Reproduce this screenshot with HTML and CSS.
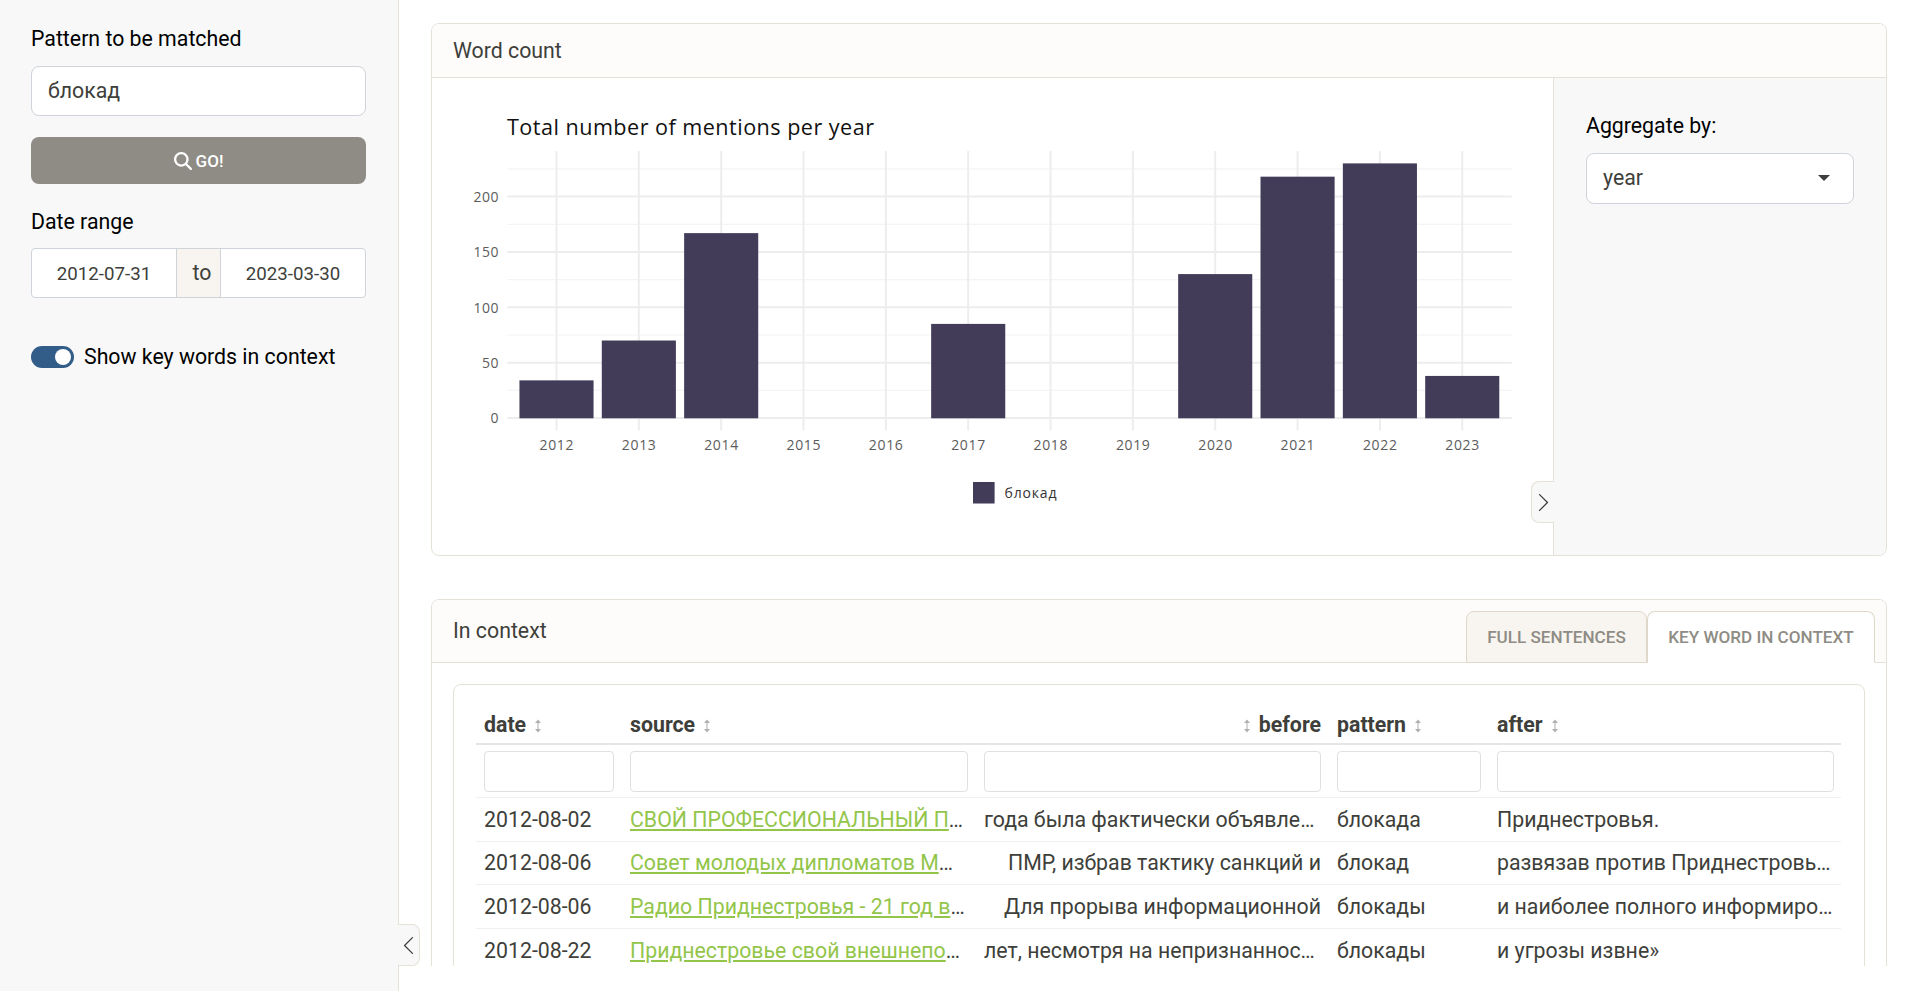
FILE: index.html
```html
<!DOCTYPE html>
<html lang="en">
<head>
<meta charset="utf-8">
<title>Word count</title>
<link rel="stylesheet" href="styles.css">
</head>
<body>
<svg class="defs" width="0" height="0" aria-hidden="true">
  <symbol id="sort" viewBox="0 0 10 16"><path d="M5 3v10" stroke="#c4c4c2" stroke-width="1.4"/><path d="M2 5 5 1.600 8 5zM2 11l3 3.400L8 11z" fill="#b0b0ae"/></symbol>
  <symbol id="chev-left" viewBox="0 0 16 16"><path fill-rule="evenodd" d="M11.354 1.646a.5.5 0 0 1 0 .708L5.707 8l5.647 5.646a.5.5 0 0 1-.708.708l-6-6a.5.5 0 0 1 0-.708l6-6a.5.5 0 0 1 .708 0z"/></symbol>
</svg>
<div class="app">
  <aside class="sidebar">
    <label class="label">Pattern to be matched</label>
    <div class="input">блокад</div>
    <button class="go"><svg class="go-icon" viewBox="0 0 512 512"><path fill="#fff" d="M416 208c0 45.900-14.900 88.300-40 122.700L502.600 457.400c12.500 12.500 12.500 32.800 0 45.300s-32.800 12.500-45.300 0L330.700 376c-34.400 25.200-76.800 40-122.700 40C93.100 416 0 322.900 0 208S93.100 0 208 0S416 93.100 416 208zM208 352a144 144 0 1 0 0-288 144 144 0 1 0 0 288z"/></svg><span>GO!</span></button>
    <label class="label">Date range</label>
    <div class="dates"><div class="date">2012-07-31</div><div class="to">to</div><div class="date">2023-03-30</div></div>
    <div class="switch-row"><span class="switch"><span class="knob"></span></span><span>Show key words in context</span></div>
    <div class="collapse main-collapse"><svg width="21" height="21"><use href="#chev-left"/></svg></div>
  </aside>
  <main class="main">
    <section class="card count-card">
      <header class="card-head">Word count</header>
      <div class="card-body">
        <div class="plot"><svg id="chart" width="1121" height="477" viewBox="432 78 1121 477"></svg></div>
        <div class="options">
          <label class="label">Aggregate by:</label>
          <div class="input select"><span>year</span><i class="caret"></i></div>
          <div class="collapse card-collapse"><svg class="flip" width="21" height="21"><use href="#chev-left"/></svg></div>
        </div>
      </div>
    </section>
    <section class="card context-card">
      <header class="card-head tabs-head"><span>In context</span>
        <nav class="tabs"><a class="tab">FULL SENTENCES</a><a class="tab active">KEY WORD IN CONTEXT</a></nav>
      </header>
      <div class="table-card">
        <div class="row head">
          <div class="cell">date<svg class="sort"><use href="#sort"/></svg></div>
          <div class="cell">source<svg class="sort"><use href="#sort"/></svg></div>
          <div class="cell right"><svg class="sort"><use href="#sort"/></svg>before</div>
          <div class="cell">pattern<svg class="sort"><use href="#sort"/></svg></div>
          <div class="cell">after<svg class="sort"><use href="#sort"/></svg></div>
        </div>
        <div class="row filters"><i></i><i></i><i></i><i></i><i></i></div>
        <div class="row"><div class="cell">2012-08-02</div><div class="cell"><a>СВОЙ ПРОФЕССИОНАЛЬНЫЙ П</a>…</div><div class="cell right"><span class="fill">года была фактически объявле…</span></div><div class="cell">блокада</div><div class="cell">Приднестровья.</div></div>
        <div class="row"><div class="cell">2012-08-06</div><div class="cell"><a>Совет молодых дипломатов М</a>…</div><div class="cell right">ПМР, избрав тактику санкций и</div><div class="cell">блокад</div><div class="cell">развязав против Приднестровь…</div></div>
        <div class="row"><div class="cell">2012-08-06</div><div class="cell"><a>Радио Приднестровья - 21 год в</a>…</div><div class="cell right">Для прорыва информационной</div><div class="cell">блокады</div><div class="cell">и наиболее полного информиро…</div></div>
        <div class="row"><div class="cell">2012-08-22</div><div class="cell"><a>Приднестровье свой внешнепо</a>…</div><div class="cell right"><span class="fill">лет, несмотря на непризнаннос…</span></div><div class="cell">блокады</div><div class="cell">и угрозы извне»</div></div>
      </div>
    </section>
  </main>
</div>
<script src="chart.js"></script>
</body>
</html>
```
FILE: styles.css
```css
* { box-sizing: border-box; }
body { margin: 0; background: #fff; color: #3e3f3a; font: 21.3px/32px Roboto, sans-serif; height: 991px; overflow: hidden; }
.defs { position: absolute; }
.app { display: flex; height: 991px; }
.sidebar { position: relative; width: 399px; flex: none; background: #f8f8f8; border-right: 1px solid #e6e1d7; padding: 23px 32px 0 31px; color: #000; }
.label { display: block; color: #000; height: 32px; margin-bottom: 11px; white-space: nowrap; }
.input { height: 50px; border: 1px solid #ced4da; border-radius: 8px; background: #fff; color: #3e3f3a; padding: 8px 16px; }
.go { display: flex; align-items: center; justify-content: center; gap: 4px; width: 335px; height: 47px; margin: 21px 0 22px; border: 0; border-radius: 8px; background: #8e8c84; color: #fff; font: 500 17px/26px Roboto, sans-serif; }
.go-icon { width: 18px; height: 18px; }
.go + .label { margin-bottom: 10px; }
.dates { display: flex; height: 50px; border: 1px solid #ced4da; border-radius: 4px; background: #fff; color: #3e3f3a; line-height: 48px; text-align: center; overflow: hidden; }
.date { flex: 1; font-size: 18.7px; line-height: 50px; }
.to { width: 45px; background: #f8f5f0; border: solid #ced4da; border-width: 0 1px; padding-left: 7px; }
.switch-row { display: flex; align-items: center; gap: 10px; margin-top: 43px; white-space: nowrap; }
.switch { width: 43px; height: 22px; border-radius: 11px; background: #325d88; padding: 3px; display: flex; justify-content: flex-end; }
.knob { width: 16px; height: 16px; border-radius: 50%; background: #fff; }
.collapse { position: absolute; width: 22px; height: 42px; background: #f8f8f8; border: 1px solid #e6e1d7; display: flex; align-items: center; justify-content: center; fill: #3e3f3a; }
.collapse svg { flex: none; }
.main-collapse { left: 398px; top: 924px; border-left: 0; border-radius: 0 8px 8px 0; }
.card-collapse { left: -23px; top: 403px; width: 23px; border-right: 0; border-radius: 8px 0 0 8px; }
.flip { transform: scaleX(-1); }
.main { flex: 1; padding: 23px 21px 0 32px; height: 966px; overflow: hidden; }
.card { border: 1px solid #e6e1d7; border-radius: 8px; background: #fff; }
.count-card { height: 533px; margin-bottom: 43px; }
.card-head { height: 54px; line-height: 53px; padding-left: 21px; background: #fdfcfa; border-bottom: 1px solid #e6e1d7; border-radius: 7px 7px 0 0; }
.card-body { display: flex; height: 477px; }
.plot { flex: 1; }
.plot svg { display: block; }
.options { position: relative; width: 333px; background: #f8f8f8; border-left: 1px solid #e6e1d7; border-radius: 0 0 7px 0; padding: 32px 32px 0 32px; }
.options .input { height: 51px; }
.select { display: flex; justify-content: space-between; align-items: center; padding: 7px 16px 9px; }
.caret { border: 6px solid transparent; border-top-color: #3e3f3a; border-bottom: 0; margin-right: 7px; }
.context-card { height: 500px; }
.tabs-head { display: flex; justify-content: space-between; height: 63px; line-height: 62px; }
.tabs { display: flex; padding: 11px 11px 0 0; }
.tab { height: 52px; border: 1px solid #dfd7ca; border-radius: 8px 8px 0 0; background: #f8f5f0; color: #8e8c84; font-weight: 500; font-size: 17.1px; line-height: 51px; text-align: center; width: 181px; }
.tab.active { width: 228px; background: #fff; border-bottom-color: #fff; }
.table-card { margin: 21px 21px 0; height: 480px; border: 1px solid #e6e1d7; border-radius: 8px; padding: 14px 23px 0 22px; }
.row { display: grid; grid-template-columns: 146px 354px 353px 160px 353px; border-top: 1px solid #f0f0f0; height: 43.700px; }
.row.head { border-top: 0; border-bottom: 2px solid #e5e5e5; height: 46px; font-weight: 700; }
.row.head .cell { padding-top: 10px; }
.cell { padding: 5.500px 8px 0; white-space: nowrap; overflow: hidden; }
.right { text-align: right; }
.fill { display: block; text-align: left; }
.cell a { color: #93c54b; text-decoration: underline; }
.sort { width: 10px; height: 16px; margin: 0 7px; vertical-align: -2px; }
.row.filters { border: 0; height: 52px; }
.filters i { height: 41px; margin: 6px 8px 0; border: 1px solid #e0e0e0; border-radius: 4px; }
.chart-text { font-family: "Open Sans", sans-serif; font-size: 14px; fill: #5c5c5c; }
.chart-text.legend { fill: #333; }
.chart-title { font-family: "Open Sans", sans-serif; font-size: 21.6px; fill: #111; }
.major { stroke: #ededed; stroke-width: 2; }
.minor { stroke: #f4f4f4; stroke-width: 1.2; }
.bar { fill: #423c59; }
```
FILE: chart.js
```js
const svg = document.getElementById("chart");
const ns = "http://www.w3.org/2000/svg";
const values = [34, 70, 167, 0, 0, 85, 0, 0, 130, 218, 230, 38];
const left = 507.3, right = 1511.7, top0 = 151, bottom = 430.5;
const px = i => 556.5 + i * 82.34;
const py = v => 418 - v * 1.107;

function add(tag, attrs, text) {
  const el = document.createElementNS(ns, tag);
  for (const k in attrs) el.setAttribute(k, attrs[k]);
  if (text) el.textContent = text;
  svg.appendChild(el);
}

for (let v = 25; v <= 225; v += 50) add("line", { x1: left, x2: right, y1: py(v), y2: py(v), class: "minor" });
for (let v = 0; v <= 200; v += 50) {
  add("line", { x1: left, x2: right, y1: py(v), y2: py(v), class: "major" });
  const w = [0, 8, 16.5, 25][String(v).length];
  add("text", { x: 498.5 - w, y: py(v) + 5.2, textLength: w, class: "chart-text" }, String(v));
}
for (let i = 0; i < values.length; i++) add("line", { x1: px(i), x2: px(i), y1: top0, y2: bottom, class: "major" });
values.forEach((v, i) => {
  if (v) add("rect", { x: px(i) - 37.05, y: py(v), width: 74.1, height: 418.3 - py(v), class: "bar" });
  add("text", { x: px(i) - 17, y: 449.5, textLength: 34, class: "chart-text" }, String(2012 + i));
});
add("text", { x: 507, y: 135, textLength: 367, class: "chart-title" }, "Total number of mentions per year");
add("rect", { x: 973, y: 482, width: 21.6, height: 21.5, class: "bar" });
add("text", { x: 1004.5, y: 498, textLength: 52, class: "chart-text legend" }, "блокад");
```
